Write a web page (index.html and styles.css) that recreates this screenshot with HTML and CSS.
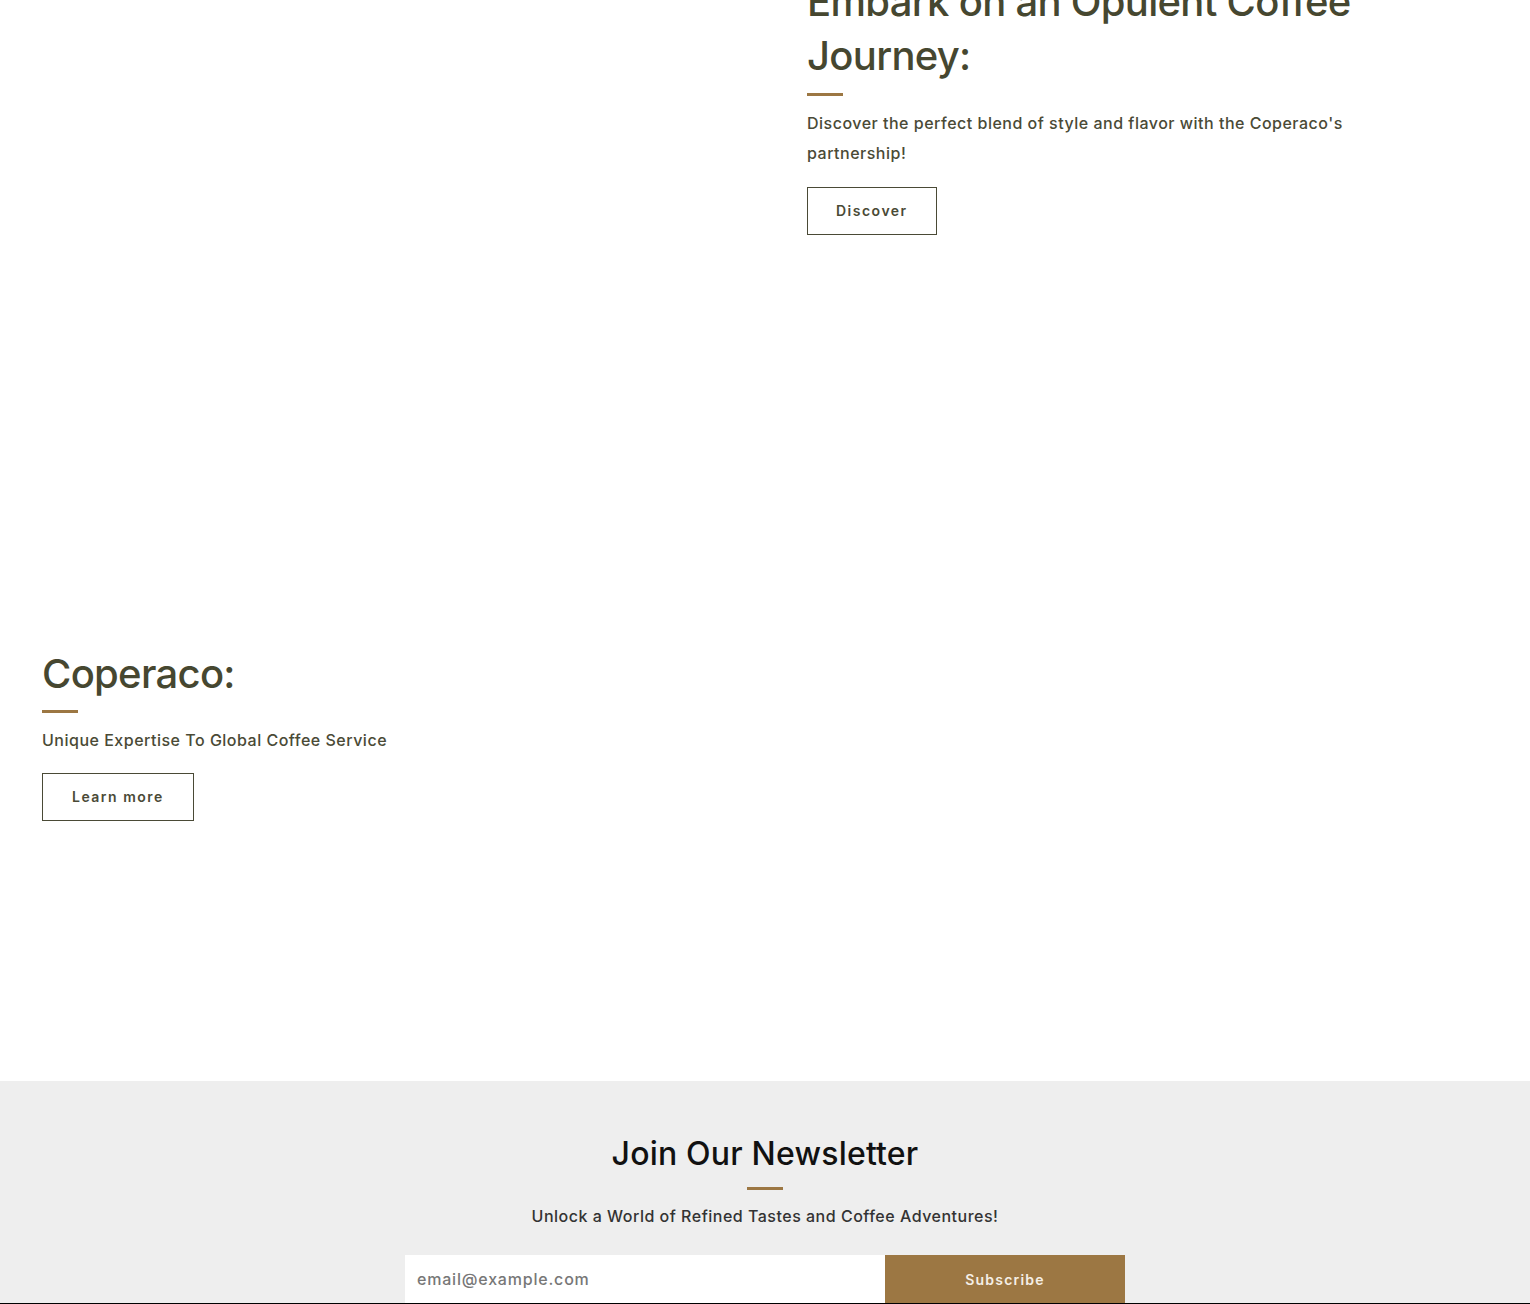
FILE: index.html
```html
<!DOCTYPE html>
<html lang="en">
  <head>
    <meta charset="UTF-8" />
    <meta name="viewport" content="width=device-width, initial-scale=1.0" />
    <title>Coperaco</title>
    <link rel="stylesheet" href="styles.css">
  </head>
  <body>
    <main class="page">
      <section class="feature feature-first">
        <div class="feature-media"></div>
        <div class="feature-text">
          <h2>Embark on an Opulent Coffee Journey:</h2>
          <span class="bar"></span>
          <p>Discover the perfect blend of style and flavor with the Coperaco's partnership!</p>
          <a class="btn" href="#">Discover</a>
        </div>
      </section>

      <section class="feature feature-second">
        <div class="feature-text">
          <h2>Coperaco:</h2>
          <span class="bar"></span>
          <p>Unique Expertise To Global Coffee Service</p>
          <a class="btn" href="#">Learn more</a>
        </div>
        <div class="feature-media"></div>
      </section>

      <section class="newsletter">
        <h3>Join Our Newsletter</h3>
        <span class="bar"></span>
        <p>Unlock a World of Refined Tastes and Coffee Adventures!</p>
        <form class="subscribe">
          <input type="email" placeholder="email@example.com" />
          <button type="button">Subscribe</button>
        </form>
      </section>
    </main>
    <footer class="footer"></footer>
  </body>
</html>
```

FILE: styles.css
```css
body {
  margin: 0;
  background: #fff;
  font-family: Inter, "Noto Sans", sans-serif;
  color: #4a4a36;
}
.page {
  /* page is scrolled a little, first heading line sits above the fold */
  margin-top: -25px;
}
.feature {
  display: grid;
  grid-template-columns: 1fr 1fr;
}
.feature-text {
  padding: 0 42px;
}
.feature-first {
  padding-bottom: 412px;
}
.feature-second {
  padding-bottom: 260px;
}
.feature h2 {
  margin: 0;
  font-size: 40px;
  line-height: 54px;
  font-weight: 500;
  letter-spacing: -0.7px;
  color: #464730;
  max-width: 600px;
}
.bar {
  display: block;
  width: 36px;
  height: 3px;
  background: #9c7743;
  margin-top: 10px;
}
.feature-second .bar {
  margin-top: 9px;
}
.feature p {
  margin: 12px 0 0;
  font-size: 16px;
  line-height: 30px;
  font-weight: 500;
  letter-spacing: 0.5px;
  max-width: 600px;
}
.btn {
  display: inline-block;
  margin-top: 19px;
  padding: 0 28px;
  height: 46px;
  line-height: 46px;
  border: 1px solid #4a4a36;
  color: #4a4a36;
  font-size: 14px;
  font-weight: 600;
  letter-spacing: 1.5px;
  text-decoration: none;
}
.feature-second .btn {
  margin-top: 18px;
  padding: 0 29px;
}
.newsletter {
  background: #eeeeee;
  display: flex;
  flex-direction: column;
  align-items: center;
  padding-top: 51px;
}
.newsletter h3 {
  margin: 0;
  font-size: 32px;
  line-height: 44px;
  font-weight: 500;
  letter-spacing: 0.2px;
  color: #111;
}
.newsletter .bar {
  margin-top: 11px;
}
.newsletter p {
  margin: 14px 0 0;
  font-size: 16px;
  line-height: 24px;
  font-weight: 500;
  letter-spacing: 0.5px;
  color: #333;
}
.subscribe {
  display: flex;
  margin-top: 27px;
  width: 720px;
}
.subscribe input {
  flex: 1;
  height: 48px;
  box-sizing: border-box;
  border: 0;
  padding: 0 12px;
  font: 500 16px Inter, sans-serif;
  letter-spacing: 0.8px;
  color: #333;
  background: #fff;
}
.subscribe input::placeholder {
  color: #777;
}
.subscribe button {
  width: 240px;
  height: 48px;
  border: 0;
  background: #9c7743;
  color: #f5efe6;
  font: 600 14px Inter, sans-serif;
  letter-spacing: 1.2px;
}
.footer {
  background: #000;
  height: 200px;
}
```
